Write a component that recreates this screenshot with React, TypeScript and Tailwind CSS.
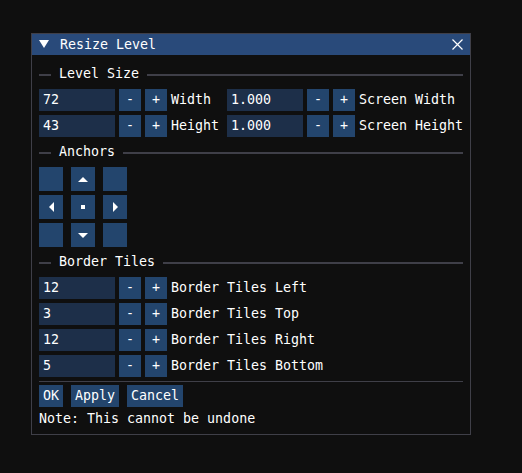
import React from "react";

const SEP = "bg-[#3f3f48]";

function SepText({ label }: { label: string }) {
  return (
    <div className="flex h-[22px] items-center">
      <div className={`mt-[2px] h-[2px] w-[12px] ${SEP}`} />
      <span className="ml-[8px] leading-none">{label}</span>
      <div className={`mt-[2px] ml-[8px] h-[2px] flex-1 ${SEP}`} />
    </div>
  );
}

function Btn({ children, className = "" }: { children: React.ReactNode; className?: string }) {
  return (
    <div className={`flex h-[22px] items-center justify-center bg-[#23456d] leading-none ${className}`}>
      {children}
    </div>
  );
}

function Stepper({ value, label }: { value: string; label: string }) {
  return (
    <div className="flex h-[22px] items-center">
      <div className="flex h-[22px] w-[76px] items-center bg-[#1d2f49] pl-[4px] leading-none">{value}</div>
      <Btn className="ml-[4px] w-[22px]">-</Btn>
      <Btn className="ml-[4px] w-[22px]">+</Btn>
      <span className="ml-[4px] leading-none">{label}</span>
    </div>
  );
}

function Tri({ dir }: { dir: "up" | "down" | "left" | "right" }) {
  const pts = {
    up: "0,5 10,5 5,0",
    down: "0,0 10,0 5,5",
    left: "5,0 5,10 0,5",
    right: "0,0 0,10 5,5",
  }[dir];
  const vertical = dir === "up" || dir === "down";
  return (
    <svg width={vertical ? 10 : 5} height={vertical ? 5 : 10} viewBox={vertical ? "0 0 10 5" : "0 0 5 10"}>
      <polygon points={pts} fill="#ffffff" />
    </svg>
  );
}

function Anchor({ children }: { children?: React.ReactNode }) {
  return <div className="flex h-[24px] w-[24px] items-center justify-center bg-[#23456d]">{children}</div>;
}

export default function App() {
  return (
    <div className="h-[473px] w-[522px] bg-[#0f0f0f] pl-[31px] pt-[33px] font-['DejaVu_Sans_Mono','Liberation_Mono',monospace] text-[13.3px] text-white">
      <div className="flex h-[402px] w-[440px] flex-col border border-[#3f3f48] bg-[#0f0f0f]">
        {/* title bar */}
        <div className="flex h-[21px] items-center bg-[#294a7a] pl-[7px] pr-[7px]">
          <svg width="10" height="8" viewBox="0 0 10 8" className="mb-[1px]">
            <polygon points="0,0 10,0 5,8" fill="#ffffff" />
          </svg>
          <span className="ml-[11px] leading-none">Resize Level</span>
          <svg width="11" height="11" viewBox="0 0 11 11" className="ml-auto mb-[1px]">
            <path d="M0.5 0.5 L10.5 10.5 M10.5 0.5 L0.5 10.5" stroke="#ffffff" strokeWidth="1.2" />
          </svg>
        </div>

        <div className="flex flex-col px-[7px] pt-[8px]">
          <SepText label="Level Size" />
          <div className="mt-[4px] flex flex-col gap-[4px]">
            <div className="flex">
              <div className="w-[188px]">
                <Stepper value="72" label="Width" />
              </div>
              <Stepper value="1.000" label="Screen Width" />
            </div>
            <div className="flex">
              <div className="w-[188px]">
                <Stepper value="43" label="Height" />
              </div>
              <Stepper value="1.000" label="Screen Height" />
            </div>
          </div>

          <div className="mt-[4px]">
            <SepText label="Anchors" />
          </div>
          <div className="mt-[4px] grid w-[88px] grid-cols-3 gap-x-[8px] gap-y-[4px]">
            <Anchor />
            <Anchor>
              <Tri dir="up" />
            </Anchor>
            <Anchor />
            <Anchor>
              <Tri dir="left" />
            </Anchor>
            <Anchor>
              <div className="h-[4px] w-[4px] bg-white" />
            </Anchor>
            <Anchor>
              <Tri dir="right" />
            </Anchor>
            <Anchor />
            <Anchor>
              <Tri dir="down" />
            </Anchor>
            <Anchor />
          </div>

          <div className="mt-[4px]">
            <SepText label="Border Tiles" />
          </div>
          <div className="mt-[4px] flex flex-col gap-[4px]">
            <Stepper value="12" label="Border Tiles Left" />
            <Stepper value="3" label="Border Tiles Top" />
            <Stepper value="12" label="Border Tiles Right" />
            <Stepper value="5" label="Border Tiles Bottom" />
          </div>

          <div className={`mt-[4px] h-px ${SEP}`} />
          <div className="mt-[3px] flex gap-[8px]">
            <Btn className="px-[4px]">OK</Btn>
            <Btn className="px-[4px]">Apply</Btn>
            <Btn className="px-[4px]">Cancel</Btn>
          </div>
          <div className="mt-[5px] leading-none">Note: This cannot be undone</div>
        </div>
      </div>
    </div>
  );
}
